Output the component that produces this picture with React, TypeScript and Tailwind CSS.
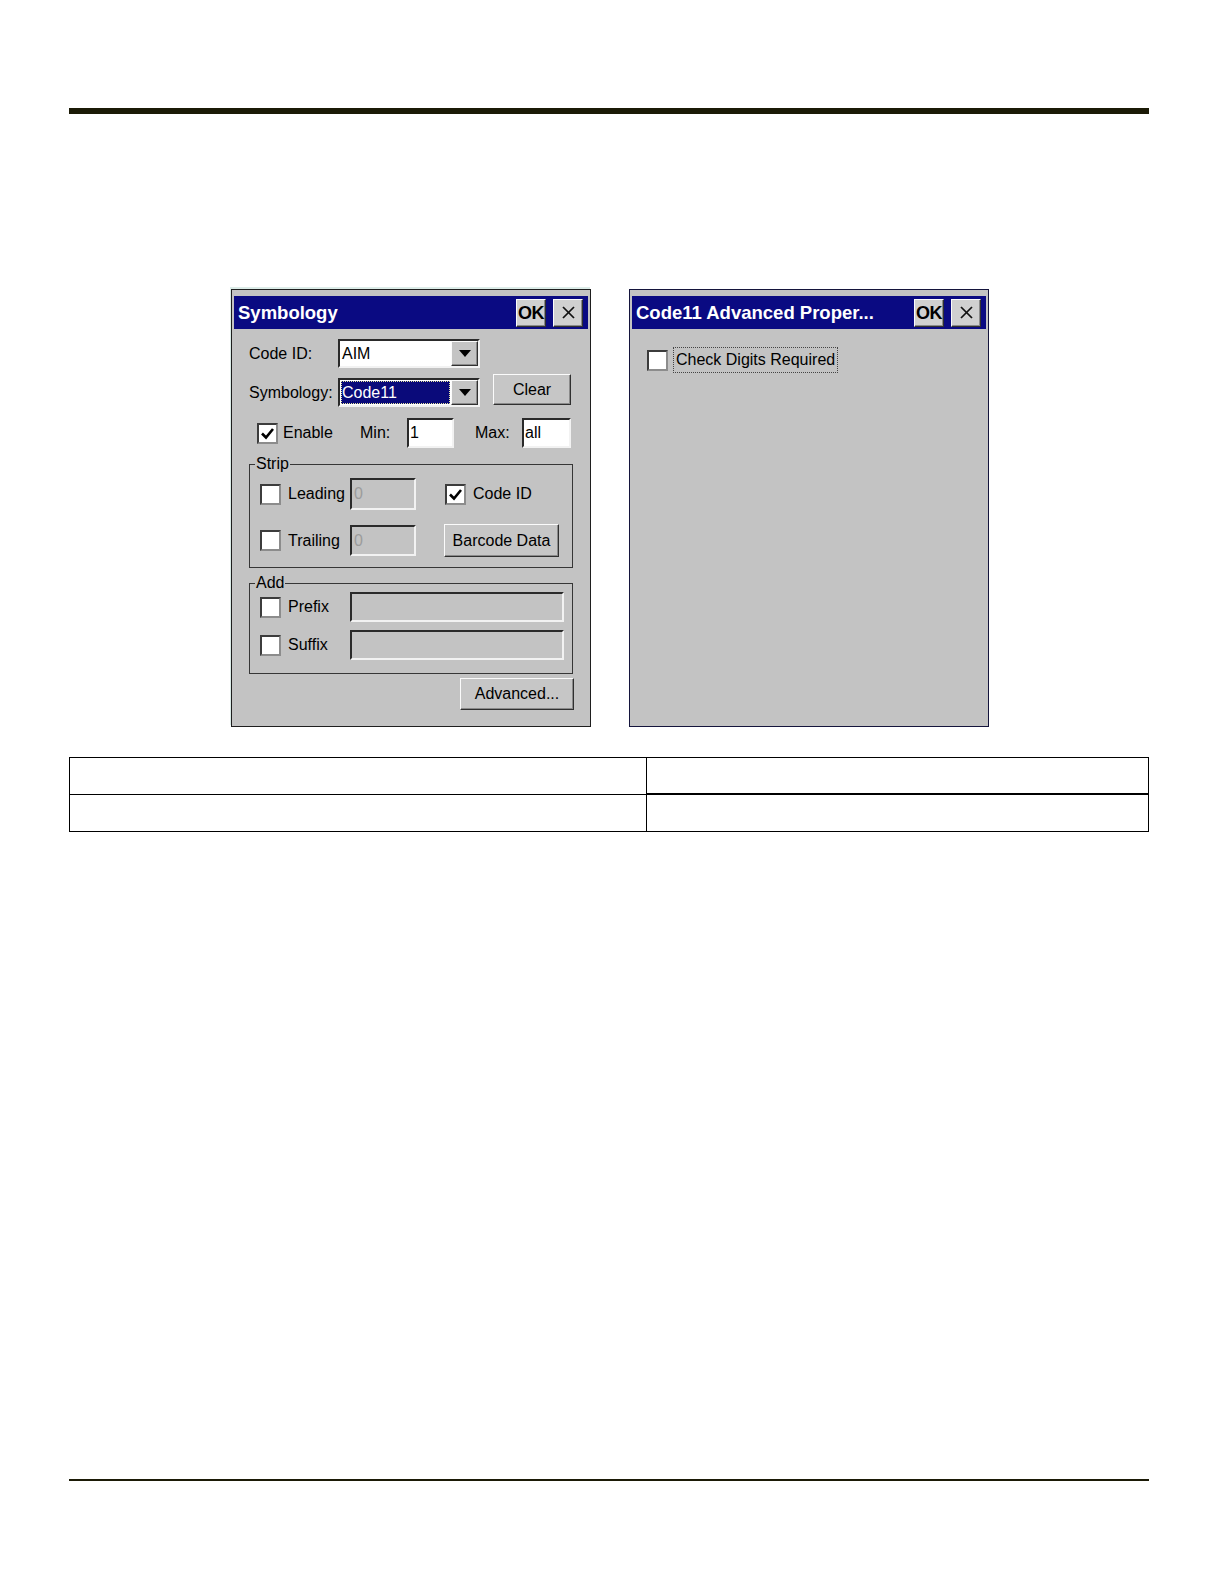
import React from "react";

const FONT = "font-['Liberation_Sans',Arial,sans-serif]";

const sunken =
  "border-2 border-t-[#2a2a2a] border-l-[#2a2a2a] border-r-[#f2f2f2] border-b-[#f2f2f2]";
const raised =
  "border border-t-[#fbfbfb] border-l-[#fbfbfb] border-r-[#303030] border-b-[#303030] shadow-[inset_-1px_-1px_0_#8a8a8a]";

function CheckBox({ checked }: { checked?: boolean }) {
  return (
    <div className="w-[21px] h-[21px] shrink-0 bg-white border-2 border-t-[#3c3c3c] border-l-[#3c3c3c] border-r-[#8c8c8c] border-b-[#8c8c8c] flex items-center justify-center">
      {checked && (
        <svg width="15" height="15" viewBox="0 0 15 15">
          <polyline points="2,7.5 6,11.5 13,3" fill="none" stroke="#000" strokeWidth="2.6" />
        </svg>
      )}
    </div>
  );
}

function DropBtn() {
  return (
    <div className={`w-[27px] h-full shrink-0 bg-[#c4c4c4] ${raised} flex items-center justify-center`}>
      <svg width="12" height="7" viewBox="0 0 12 7">
        <polygon points="0,0 12,0 6,7" fill="#000" />
      </svg>
    </div>
  );
}

function CloseX() {
  return (
    <svg width="15" height="15" viewBox="0 0 15 15">
      <line x1="2" y1="2" x2="13" y2="13" stroke="#111" strokeWidth="1.7" />
      <line x1="13" y1="2" x2="2" y2="13" stroke="#111" strokeWidth="1.7" />
    </svg>
  );
}

function TitleBar({ title }: { title: string }) {
  return (
    <div className="h-[33px] bg-[#0a0a82] flex items-center pl-[4px] pr-[5px] shrink-0">
      <span className="text-white font-bold text-[18.5px] leading-[22px] flex-1 whitespace-nowrap">
        {title}
      </span>
      <div className={`w-[30px] h-[28px] bg-[#d0d0d0] ${raised} flex items-center justify-center`}>
        <span className="text-black font-bold text-[18px] leading-[20px] tracking-[-0.5px]">OK</span>
      </div>
      <div className={`ml-[7px] w-[30px] h-[28px] bg-[#d0d0d0] ${raised} flex items-center justify-center`}>
        <CloseX />
      </div>
    </div>
  );
}

function Button({ label, w, h }: { label: string; w: number; h: number }) {
  return (
    <div
      className={`bg-[#c6c6c6] ${raised} flex items-center justify-center text-[16px] leading-none text-black shrink-0`}
      style={{ width: w, height: h }}
    >
      {label}
    </div>
  );
}

function SymbologyDialog() {
  return (
    <div className="w-[360px] h-[438px] bg-[#c3c3c3] border border-[#1e1e1e] pt-[6px] px-[2px] flex flex-col shadow-[-1px_-2px_0_#dcece8]">
      <TitleBar title="Symbology" />
      <div className="flex flex-col text-[16px] leading-none text-black">
        {/* Code ID row */}
        <div className="mt-[10px] flex items-center h-[29px]">
          <span className="ml-[15px] w-[89px]">Code ID:</span>
          <div className={`w-[142px] h-[29px] bg-white ${sunken} flex items-stretch`}>
            <span className="flex-1 pl-[2px] flex items-center">AIM</span>
            <DropBtn />
          </div>
        </div>
        {/* Symbology row */}
        <div className="mt-[6px] flex items-start h-[31px]">
          <span className="ml-[15px] w-[89px] mt-[11px]">Symbology:</span>
          <div className={`mt-[4px] w-[142px] h-[29px] bg-white ${sunken} flex items-stretch`}>
            <div className="flex-1 p-[1px] flex">
              <span className="flex-1 bg-[#0a0a7a] text-white pl-[1px] flex items-center outline-1 outline-dotted outline-[#e8e8a0] -outline-offset-1">
                Code11
              </span>
            </div>
            <DropBtn />
          </div>
          <div className="ml-[13px]">
            <Button label="Clear" w={78} h={31} />
          </div>
        </div>
        {/* Enable row */}
        <div className="mt-[13px] flex items-center h-[30px]">
          <div className="ml-[23px]">
            <CheckBox checked />
          </div>
          <span className="ml-[5px] w-[77px]">Enable</span>
          <span className="w-[47px]">Min:</span>
          <div className={`w-[47px] h-[30px] bg-white ${sunken} pl-[1px] flex items-center`}>1</div>
          <span className="ml-[21px] w-[47px]">Max:</span>
          <div className={`w-[49px] h-[30px] bg-white ${sunken} pl-[1px] flex items-center`}>all</div>
        </div>
        {/* Strip group */}
        <fieldset className="mt-[8px] ml-[15px] w-[324px] border border-[#363636] p-0 m-0">
          <legend className="ml-[5px] px-[1px] leading-[16px] h-[16px]">Strip</legend>
          <div className="pt-[6px] pl-[10px] pb-[10px] flex flex-col">
            <div className="flex items-center h-[32px]">
              <CheckBox />
              <span className="ml-[7px] w-[62px]">Leading</span>
              <div className={`w-[66px] h-[32px] ${sunken} pl-[2px] flex items-center text-[#9c9c9c]`}>0</div>
              <div className="ml-[29px]">
                <CheckBox checked />
              </div>
              <span className="ml-[7px]">Code ID</span>
            </div>
            <div className="mt-[14px] flex items-center h-[33px]">
              <CheckBox />
              <span className="ml-[7px] w-[62px]">Trailing</span>
              <div className={`w-[66px] h-[31px] ${sunken} pl-[2px] flex items-center text-[#9c9c9c]`}>0</div>
              <div className="ml-[28px]">
                <Button label="Barcode Data" w={115} h={33} />
              </div>
            </div>
          </div>
        </fieldset>
        {/* Add group */}
        <fieldset className="mt-[7px] ml-[15px] w-[324px] border border-[#363636] p-0 m-0">
          <legend className="ml-[5px] px-[1px] leading-[16px] h-[16px]">Add</legend>
          <div className="pt-[1px] pl-[10px] pb-[13px] flex flex-col">
            <div className="flex items-center h-[30px]">
              <CheckBox />
              <span className="ml-[7px] w-[62px]">Prefix</span>
              <div className={`w-[214px] h-[30px] ${sunken}`} />
            </div>
            <div className="mt-[8px] flex items-center h-[30px]">
              <CheckBox />
              <span className="ml-[7px] w-[62px]">Suffix</span>
              <div className={`w-[214px] h-[30px] ${sunken}`} />
            </div>
          </div>
        </fieldset>
        <div className="mt-[4px] self-end mr-[14px]">
          <Button label="Advanced..." w={114} h={32} />
        </div>
      </div>
    </div>
  );
}

function AdvancedDialog() {
  return (
    <div className="w-[360px] h-[438px] bg-[#c3c3c3] border border-[#14143c] pt-[6px] px-[2px] flex flex-col">
      <TitleBar title="Code11 Advanced Proper..." />
      <div className="mt-[19px] ml-[15px] flex items-center text-[16px] leading-none text-black">
        <CheckBox />
        <span className="ml-[6px] px-[2px] py-[4px] outline-1 outline-dotted outline-[#444]">
          Check Digits Required
        </span>
      </div>
    </div>
  );
}

export default function App() {
  return (
    <div className={`w-[1224px] h-[1584px] bg-white flex flex-col ${FONT}`}>
      <div className="mt-[108px] ml-[69px] w-[1080px] h-[6px] bg-[#1b1a06]" />
      <div className="mt-[175px] ml-[231px] flex gap-[38px]">
        <SymbologyDialog />
        <AdvancedDialog />
      </div>
      <div className="mt-[30px] ml-[69px] w-[1080px] border border-black grid grid-cols-[577px_1fr]">
        <div className="h-[37px] border-r border-b border-black" />
        <div className="h-[37px] border-b-2 border-black" />
        <div className="h-[36px] border-r border-black" />
        <div className="h-[36px]" />
      </div>
      <div className="mt-[647px] ml-[69px] w-[1080px] h-[2px] bg-[#1b1a06]" />
    </div>
  );
}
